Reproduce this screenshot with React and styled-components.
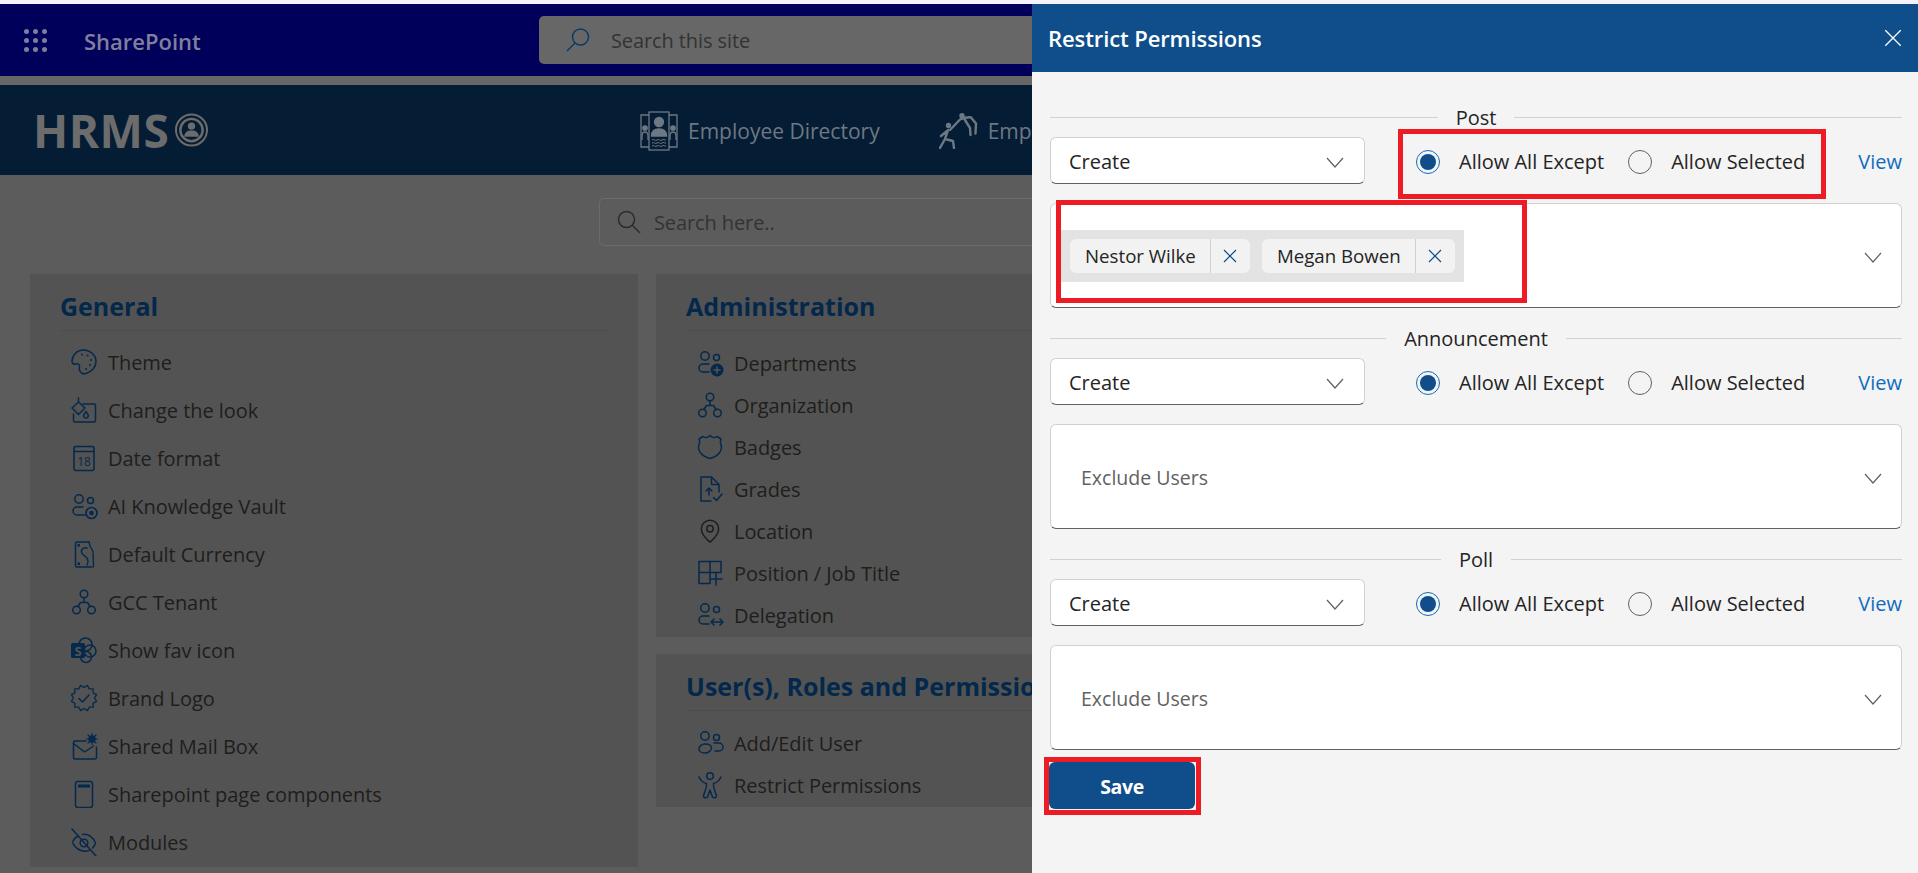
import React from "react";
import styled, { createGlobalStyle } from "styled-components";
import { MapPin } from "lucide-react";

const FONT = `"Open Sans", "Noto Sans", "Liberation Sans", sans-serif`;

const GlobalStyle = createGlobalStyle`
html, body {
    margin: 0;
    padding: 0;
    background: #5c5c5c;
    overflow: hidden;
}
* {
    box-sizing: border-box;
}
`;

const Page = styled.div`
position: relative;
width: 1918px;
height: 873px;
overflow: hidden;
font-family: ${FONT};
background: #5c5c5c;
`;

const TopLine = styled.div`
height: 4px;
background: #f6f2fc;
`;

const SuiteBar = styled.div`
display: flex;
align-items: center;
height: 72px;
padding-left: 24px;
background: #00005a;
`;

const Launcher = styled.div`
display: grid;
grid-template-columns: repeat(3, 5px);
gap: 4px;
width: 23px;
margin-right: 37px;
span {
    width: 5px;
    height: 5px;
    border-radius: 50%;
    background: #7d7d9c;
}
`;

const Brand = styled.div`
width: 455px;
padding-top: 2px;
font-size: 22px;
font-weight: 600;
color: #80809c;
`;

const SiteSearch = styled.div`
display: flex;
align-items: center;
gap: 21px;
width: 1000px;
height: 48px;
padding-left: 27px;
border-radius: 5px;
background: #676767;
font-size: 20px;
letter-spacing: -0.1px;
color: #333;
`;

const Strip = styled.div`
height: 9px;
background: #666;
`;

const HrmsBar = styled.div`
display: flex;
align-items: center;
height: 90px;
padding-left: 33px;
background: #051d34;
`;

const Logo = styled.div`
display: flex;
align-items: center;
gap: 6px;
width: 607px;
font-size: 46px;
font-weight: 700;
letter-spacing: 0.5px;
color: #6c6c6c;
`;

const NavItem = styled.div`
display: flex;
align-items: center;
gap: 10px;
margin-right: 59px;
padding-top: 1px;
font-size: 21px;
white-space: nowrap;
color: #6d7883;
`;

const Main = styled.div`
padding: 23px 30px 0;
`;

const SearchRow = styled.div`
display: flex;
justify-content: center;
margin-bottom: 28px;
`;

const PageSearch = styled.div`
display: flex;
align-items: center;
gap: 13px;
width: 720px;
height: 48px;
padding-left: 17px;
border: 1px solid #6b6b6b;
border-radius: 5px;
font-size: 20px;
letter-spacing: -0.1px;
color: #333;
`;

const Columns = styled.div`
display: grid;
grid-template-columns: 608px 1fr;
column-gap: 18px;
`;

const Stack = styled.div`
display: flex;
flex-direction: column;
gap: 17px;
`;

const Card = styled.section`
padding: 0 30px;
background: #535353;
`;

const CardTitle = styled.h2`
height: 57px;
margin: 0;
padding-top: 13px;
border-bottom: 1px solid #4c4c4c;
font-size: 25px;
line-height: 38px;
font-weight: 700;
white-space: nowrap;
color: #03284c;
`;

const ItemList = styled.div`
display: flex;
flex-direction: column;
padding: ${(p) => p.$top}px 0 1px;
`;

const Item = styled.div`
display: flex;
align-items: center;
gap: 10px;
height: ${(p) => p.$pitch}px;
padding-left: 10px;
font-size: 20px;
letter-spacing: -0.05px;
color: #201d1b;
`;

const IconSvg = styled.svg`
flex: none;
width: 28px;
height: 28px;
fill: none;
stroke: #05294c;
stroke-width: 1.5;
stroke-linecap: round;
stroke-linejoin: round;
text {
    font-family: ${FONT};
    stroke: none;
}
`;

const Solid = styled.g`
fill: #05294c;
stroke: none;
`;

const Panel = styled.aside`
position: absolute;
top: 4px;
right: 0;
bottom: 0;
width: 886px;
display: flex;
flex-direction: column;
background: #f4f4f4;
`;

const PanelHeader = styled.header`
display: flex;
align-items: center;
justify-content: space-between;
flex: none;
height: 68px;
padding: 0 16px;
background: #0f4e8a;
font-size: 22px;
font-weight: 600;
letter-spacing: -0.1px;
color: #fff;
`;

const PanelBody = styled.div`
position: relative;
display: flex;
flex-direction: column;
gap: 18px;
padding: 33px 16px 0 18px;
`;

const Divider = styled.div`
display: flex;
align-items: center;
gap: 18px;
height: 24px;
margin-bottom: 8px;
font-size: 20px;
color: #242424;
span {
    padding-top: 1px;
}
&::before,
&::after {
    content: "";
    flex: 1;
    height: 1px;
    background: #d1d1d1;
}
`;

const ControlRow = styled.div`
position: relative;
display: flex;
align-items: center;
height: 47px;
margin-bottom: 19px;
`;

const Dropdown = styled.div`
display: flex;
align-items: center;
justify-content: space-between;
width: 315px;
height: 47px;
padding: 2px 20px 0 18px;
border: 1px solid #d1d1d1;
border-bottom-color: #616161;
border-radius: 6px;
background: #fff;
font-size: 20px;
color: #242424;
`;

const RadioGroup = styled.div`
display: flex;
align-items: center;
gap: 24px;
margin-left: 51px;
padding-top: 2px;
`;

const RadioOption = styled.label`
display: flex;
align-items: center;
gap: 19px;
font-size: 20px;
white-space: nowrap;
color: #242424;
`;

const RadioDot = styled.span`
display: flex;
align-items: center;
justify-content: center;
width: 24px;
height: 24px;
border: 1px solid ${(p) => (p.$on ? "#0f6cbd" : "#616161")};
border-radius: 50%;
&::after {
    content: "";
    display: ${(p) => (p.$on ? "block" : "none")};
    width: 16px;
    height: 16px;
    border-radius: 50%;
    background: #0f4e8a;
}
`;

const ViewLink = styled.a`
margin-left: auto;
padding-top: 2px;
font-size: 20px;
color: #0f6cbd;
`;

const Combo = styled.div`
position: relative;
display: flex;
align-items: center;
justify-content: space-between;
height: 105px;
padding: 2px 19px 0 ${(p) => (p.$filled ? 10 : 30)}px;
border: 1px solid #d1d1d1;
border-bottom-color: #616161;
border-radius: 6px;
background: #fff;
font-size: 19.5px;
color: #616161;
`;

const ChipBand = styled.div`
display: flex;
gap: 12px;
margin-top: -2px;
padding: 9px;
background: #e3e3e3;
`;

const Chip = styled.div`
display: flex;
align-items: center;
height: 34px;
border-radius: 6px;
background: #f2f2f2;
font-size: 18.7px;
color: #242424;
`;

const ChipName = styled.span`
padding: 0 14px 0 15px;
line-height: 34px;
white-space: nowrap;
border-right: 1px solid #d1d1d1;
`;

const ChipClose = styled.span`
display: flex;
align-items: center;
justify-content: center;
width: 39px;
color: #0f4e8a;
`;

const SaveRow = styled.div`
position: relative;
width: 146px;
margin: -6px 0 0 -1px;
`;

const SaveButton = styled.button`
display: block;
width: 146px;
height: 47px;
padding-top: 2px;
border: none;
border-radius: 6px;
background: #0f4e8a;
font-family: ${FONT};
font-size: 19.5px;
font-weight: 700;
letter-spacing: -0.4px;
color: #fff;
`;

/* red annotation frames drawn over the screenshot */
const RedFrame = styled.div`
position: absolute;
z-index: 2;
border: 5px solid #ed1c24;
pointer-events: none;
`;

const RadioFrame = styled(RedFrame)`
top: -8px;
left: 348px;
width: 428px;
height: 70px;
`;

const ChipFrame = styled(RedFrame)`
top: -4px;
left: 5px;
width: 471px;
height: 103px;
`;

const SaveFrame = styled(RedFrame)`
top: -5px;
left: -5px;
width: 157px;
height: 58px;
`;

const Chevron = ({ size = 18 }) => (
    <svg width={size} height={size} viewBox="0 0 18 18" fill="none" stroke="#616161" strokeWidth="1.2">
        <path d="M1 5l8 9 8-9" />
    </svg>
);

const Cross = ({ size = 14, color = "currentColor", width = 1.2 }) => (
    <svg width={size} height={size} viewBox="0 0 14 14" fill="none" stroke={color} strokeWidth={width}>
        <path d="M1 1l12 12M13 1L1 13" />
    </svg>
);

const badgePath = () => {
    let d = "";
    for (let i = 0; i < 24; i++) {
        const r = i % 2 ? 13 : 10.5;
        const a = (i * Math.PI) / 12;
        d += `${i ? "L" : "M"}${(14 + r * Math.sin(a)).toFixed(1)} ${(14 - r * Math.cos(a)).toFixed(1)}`;
    }
    return d + "Z";
};

const People = () => (
    <>
        <circle cx="9" cy="7" r="4.2" />
        <circle cx="20.5" cy="8.5" r="3" />
    </>
);

const Org = () => (
    <>
        <circle cx="14" cy="6" r="3.8" />
        <circle cx="6.5" cy="22" r="3.8" />
        <circle cx="21.5" cy="22" r="3.8" />
        <path d="M14 10v4M8 18.5l2.5-4h7l2.5 4" />
    </>
);

const icons = {
    theme: (
        <>
            <path d="M13.500 2C7 2 2 7.500 2 13.500c0 2 2 3.200 4 2.500s3.500 0 3.500 2.500c0 1-.5 1.800 0 3.500 .8 3 3.500 4.500 6.500 3.500 5.500-1.500 10-6.500 10-12C26 7 20 2 13.500 2z" />
            <Solid>
                <circle cx="12" cy="6.500" r="1" />
                <circle cx="17.500" cy="7.500" r="1" />
                <circle cx="21" cy="12" r="1" />
                <circle cx="20" cy="17" r="1" />
                <circle cx="16" cy="21" r="1" />
            </Solid>
        </>
    ),
    look: (
        <>
            <path d="M13 8h11a1.500 1.500 0 0 1 1.500 1.500v15a1.500 1.500 0 0 1-1.500 1.500H5a1.500 1.500 0 0 1-1.500-1.500V18" />
            <path d="M8.500 6L15 12l-6.500 6.500L2 12zM8.500 6V2" />
            <path d="M16 15.500c1.500 2 2.300 3 2.300 4.200a2.300 2.300 0 0 1-4.600 0c0-1.200.8-2.200 2.300-4.200z" />
        </>
    ),
    date: (
        <>
            <rect x="4" y="2.500" width="20" height="24" rx="2" />
            <path d="M4 7.500h20" />
            <text x="14" y="22" fontSize="12" textAnchor="middle" fill="#05294c">18</text>
        </>
    ),
    vault: (
        <>
            <People />
            <path d="M13 15H7a4 4 0 0 0 0 8h8" />
            <circle cx="21.500" cy="21" r="5.500" strokeWidth="1.700" />
            <Solid><circle cx="21.500" cy="21" r="2.300" /></Solid>
        </>
    ),
    currency: (
        <>
            <path d="M19 2H7A1.500 1.500 0 0 0 5.500 3.500v22A1.500 1.500 0 0 0 7 27h15" />
            <path d="M19 2l1 4 3 5.500.5 15.500M17 8c-5-1-7 3-4.500 6l4 3.500c2 2.500 1.500 5.500.5 7.500" strokeWidth="1.400" />
            <Solid>
                <rect x="7.500" y="4" width="2.500" height="2.500" />
                <rect x="7.500" y="22.500" width="2.500" height="2.500" />
            </Solid>
        </>
    ),
    org: <Org />,
    fav: (
        <>
            <circle cx="15.500" cy="8.500" r="6.500" />
            <circle cx="20" cy="15" r="6" />
            <circle cx="16" cy="21" r="5.500" />
            <Solid><rect x="1" y="7" width="14" height="15" rx="1.500" /></Solid>
            <text x="8" y="19.500" fontSize="13" fontWeight="700" textAnchor="middle" fill="#535353">S</text>
        </>
    ),
    brand: (
        <>
            <path d={badgePath()} strokeWidth="1.300" />
            <path d="M9 14.500l3.500 3.500 6.500-7" />
        </>
    ),
    mail: (
        <>
            <path d="M16 9H5a1.500 1.500 0 0 0-1.500 1.500v15A1.500 1.500 0 0 0 5 27h20a1.500 1.500 0 0 0 1.500-1.500V15" />
            <path d="M3.500 11.500L14.500 20l9-6" />
            <Solid><circle cx="22" cy="7" r="3.700" /></Solid>
            <path d="M22 1.500v11M16.500 7h11M18 3l8 8M26 3l-8 8" strokeWidth="1.200" />
        </>
    ),
    page: (
        <>
            <rect x="5.500" y="1.500" width="17" height="26" rx="2.500" />
            <Solid><rect x="8" y="4.500" width="12" height="3" /></Solid>
        </>
    ),
    modules: (
        <>
            <path d="M2 1l24 27" />
            <path d="M2.500 14C4 11 6 9 8 8M12.500 6.500c6-1 11 3 13 8.500-.5 2-1.500 3.500-3 5M19 22.500c-6 2-13-1-16-7" />
            <circle cx="14" cy="15" r="3.800" />
        </>
    ),
    departments: (
        <>
            <People />
            <path d="M13 15H7a4 4 0 0 0 0 8h6" />
            <Solid><circle cx="21" cy="21" r="6.500" /></Solid>
            <path d="M21 18v6M18 21h6" stroke="#535353" strokeWidth="1.500" />
        </>
    ),
    badges: <path d="M7 3.500c2 1.500 5 1.200 7-1 2 2.200 5 2.500 7 1l4 2.500c-1 2-1 3.500 0 5.500 2 6-3 12-11 14C6 23.500 1 17.500 3 11.500c1-2 1-3.500 0-5.500z" />,
    grades: (
        <>
            <path d="M15.500 2H5v24h10M15.500 2L23 9.500V17M15.500 2v7.500H23" />
            <path d="M13 20v-6.500M10 16l3-3 3 3M17.500 22.500l3 3 5.500-6.500" />
        </>
    ),
    location: <MapPin x="1" y="1" width="26" height="26" strokeWidth="1.400" />,
    position: <path d="M3 2.500h22v11H3zM14 2.500v22M3 13.500v11h11M14 20h12M20 14v12" />,
    delegation: (
        <>
            <People />
            <path d="M13 15H7a4 4 0 0 0 0 8h6M15 21h12M18 18l-3 3 3 3M24 18l3 3-3 3" />
        </>
    ),
    users: (
        <>
            <People />
            <path d="M3 20c0-3 3-5 6-5s6.500 1 6.500 4-3.500 5-7 5-5.500-2-5.500-4zM18 14h5a3 3 0 0 1 0 8h-4" />
        </>
    ),
    restrict: (
        <>
            <circle cx="14" cy="5" r="3.300" />
            <path d="M3 6c2 4 5 6 7.500 6.500.5 3-.5 5.500-3 12 0 2.500 2.500 3 4 1.500l2.500-7 2.500 7c1.500 1.500 4 1 4-1.500-2.500-6.500-3.500-9-3-12C20 12 23 10 25 6" />
        </>
    ),
};

const RowIcon = ({ name }) => <IconSvg viewBox="0 0 28 28">{icons[name]}</IconSvg>;

const SearchGlass = () => (
    <svg width="24" height="24" viewBox="0 0 24 24" fill="none" stroke="#0b3a66" strokeWidth="1.500">
        <circle cx="14.500" cy="9" r="8" />
        <path d="M9 15L1 23" />
    </svg>
);

const PageGlass = () => (
    <svg width="24" height="24" viewBox="0 0 24 24" fill="none" stroke="#2b2b2b" strokeWidth="1.500">
        <circle cx="9.500" cy="9.500" r="8" />
        <path d="M15 15l8 8" />
    </svg>
);

const LogoMark = () => (
    <svg width="33" height="34" viewBox="0 0 34 34" fill="none" stroke="#6c6c6c">
        <circle cx="17" cy="17" r="16" strokeWidth="2" />
        <circle cx="17" cy="17" r="11.500" strokeWidth="2.500" />
        <circle cx="17" cy="13" r="3.800" fill="#6c6c6c" stroke="none" />
        <path d="M9.500 24c0-4.500 3-6.500 7.500-6.500s7.500 2 7.500 6.500z" fill="#6c6c6c" stroke="none" />
    </svg>
);

const DirectoryIcon = () => (
    <svg width="38" height="40" viewBox="0 0 38 40" fill="none" stroke="#6d7883" strokeWidth="1.300">
        <rect x="9" y="1" width="20" height="38" />
        <path d="M9 4H1v32h8M29 4h8v32h-8" />
        <circle cx="19" cy="11" r="4.500" fill="#6d7883" />
        <path d="M11.500 25c0-5 3-7 7.500-7s7.500 2 7.500 7z" fill="#6d7883" />
        <path d="M12 29c2-1.500 3 1.500 5 0s3 1.500 5 0 2 .5 4 0M12 32c2-1.500 3 1.500 5 0s3 1.500 5 0 2 .5 4 0M12 35c2-1.500 3 1.500 5 0s3 1.500 5 0 2 .5 4 0" strokeWidth="1" />
        <circle cx="5" cy="17" r="2.200" fill="#6d7883" />
        <circle cx="33" cy="17" r="2.200" fill="#6d7883" />
        <path d="M2 29v-4c0-3 1.500-4 3-4s3 1 3 4v4M36 29v-4c0-3-1.500-4-3-4s-3 1-3 4v4" />
    </svg>
);

const HelpingIcon = () => (
    <svg width="39" height="36" viewBox="0 0 39 36" fill="none" stroke="#6d7883" strokeWidth="2.400" strokeLinecap="round" strokeLinejoin="round">
        <circle cx="23" cy="2.800" r="2.700" fill="#6d7883" stroke="none" />
        <circle cx="9.500" cy="12.500" r="2.700" fill="#6d7883" stroke="none" />
        <path d="M11 17L21 6.500c4-1.500 8-3 11-2l5 6-.5 10M26 7l5 8 .5 7" />
        <path d="M9 17l-3 9-5 9M6 26l8 2 1 7M8 18l-6 5" />
    </svg>
);

const general = [
    ["theme", "Theme"],
    ["look", "Change the look"],
    ["date", "Date format"],
    ["vault", "AI Knowledge Vault"],
    ["currency", "Default Currency"],
    ["org", "GCC Tenant"],
    ["fav", "Show fav icon"],
    ["brand", "Brand Logo"],
    ["mail", "Shared Mail Box"],
    ["page", "Sharepoint page components"],
    ["modules", "Modules"],
];

const administration = [
    ["departments", "Departments"],
    ["org", "Organization"],
    ["badges", "Badges"],
    ["grades", "Grades"],
    ["location", "Location"],
    ["position", "Position / Job Title"],
    ["delegation", "Delegation"],
];

const userItems = [
    ["users", "Add/Edit User"],
    ["restrict", "Restrict Permissions"],
];

const SettingsCard = ({ title, items, pitch, top }) => (
    <Card>
        <CardTitle>{title}</CardTitle>
        <ItemList $top={top}>
            {items.map(([icon, label]) => (
                <Item key={label} $pitch={pitch}>
                    <RowIcon name={icon} />
                    {label}
                </Item>
            ))}
        </ItemList>
    </Card>
);

const PermissionSection = ({ title, framed, children }) => (
    <div>
        <Divider>
            <span>{title}</span>
        </Divider>
        <ControlRow>
            <Dropdown>
                Create
                <Chevron />
            </Dropdown>
            <RadioGroup>
                <RadioOption>
                    <RadioDot $on />
                    Allow All Except
                </RadioOption>
                <RadioOption>
                    <RadioDot />
                    Allow Selected
                </RadioOption>
            </RadioGroup>
            <ViewLink>View</ViewLink>
            {framed && <RadioFrame />}
        </ControlRow>
        {children || (
            <Combo>
                Exclude Users
                <Chevron />
            </Combo>
        )}
    </div>
);

const UserChip = ({ name }) => (
    <Chip>
        <ChipName>{name}</ChipName>
        <ChipClose>
            <Cross />
        </ChipClose>
    </Chip>
);

const App = () => {
    return (
        <Page>
            <GlobalStyle />
            <TopLine />
            <SuiteBar>
                <Launcher>
                    {Array.from({ length: 9 }, (_, i) => (
                        <span key={i} />
                    ))}
                </Launcher>
                <Brand>SharePoint</Brand>
                <SiteSearch>
                    <SearchGlass />
                    Search this site
                </SiteSearch>
            </SuiteBar>
            <Strip />
            <HrmsBar>
                <Logo>
                    HRMS
                    <LogoMark />
                </Logo>
                <NavItem>
                    <DirectoryIcon />
                    Employee Directory
                </NavItem>
                <NavItem>
                    <HelpingIcon />
                    Employee
                </NavItem>
            </HrmsBar>
            <Main>
                <SearchRow>
                    <PageSearch>
                        <PageGlass />
                        Search here..
                    </PageSearch>
                </SearchRow>
                <Columns>
                    <SettingsCard title="General" items={general} pitch={48} top={7} />
                    <Stack>
                        <SettingsCard title="Administration" items={administration} pitch={42} top={11} />
                        <SettingsCard title="User(s), Roles and Permissions" items={userItems} pitch={42} top={11} />
                    </Stack>
                </Columns>
            </Main>
            <Panel>
                <PanelHeader>
                    Restrict Permissions
                    <Cross size={18} color="#fff" width={1} />
                </PanelHeader>
                <PanelBody>
                    <PermissionSection title="Post" framed>
                        <Combo $filled>
                            <ChipBand>
                                <UserChip name="Nestor Wilke" />
                                <UserChip name="Megan Bowen" />
                            </ChipBand>
                            <Chevron />
                            <ChipFrame />
                        </Combo>
                    </PermissionSection>
                    <PermissionSection title="Announcement" />
                    <PermissionSection title="Poll" />
                    <SaveRow>
                        <SaveButton>Save</SaveButton>
                        <SaveFrame />
                    </SaveRow>
                </PanelBody>
            </Panel>
        </Page>
    );
};

export default App;
